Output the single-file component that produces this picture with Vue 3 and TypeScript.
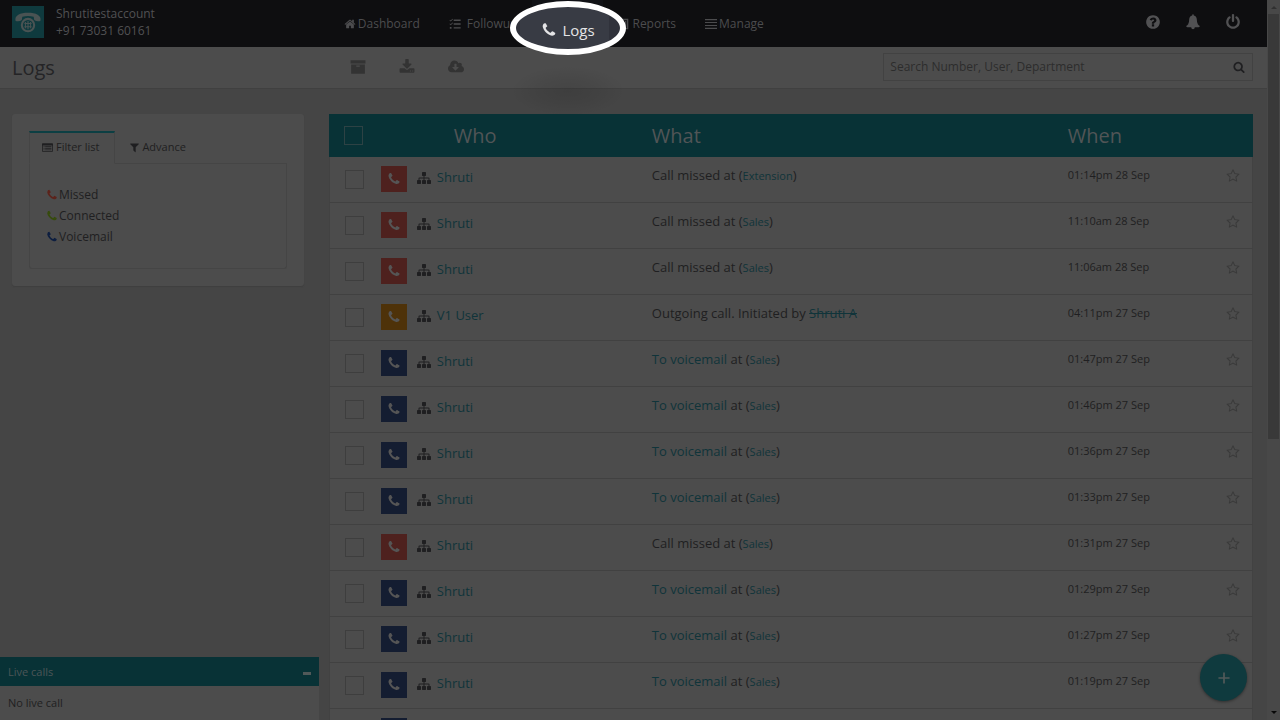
<script setup lang="ts">
import { computed, ref } from 'vue'

type Kind = 'missed' | 'outgoing' | 'voicemail'
interface Call {
  kind: Kind
  who: string
  when: string
  dept: string
}

const icons: Record<string, string> = {
  phone:
    'M1600 1240q0 27-10 70.5t-21 68.5q-21 50-122 106-94 51-186 51-27 0-53-3.5t-57.5-12.5-47-14.5-55.5-20.5-49-18q-98-35-175-83-127-79-264-216t-216-264q-48-77-83-175-3-9-18-49t-20.5-55.5-14.5-47-12.5-57.5-3.5-53q0-92 51-186 56-101 106-122 25-11 68.5-21t70.5-10q14 0 21 3 18 6 53 76 11 19 30 54t35 63.5 31 53.5q3 4 17.5 25t21.5 35.5 7 28.5q0 20-28.5 50t-62 55-62 53-28.5 46q0 9 5 22.5t8.5 20.5 14 24 11.5 19q76 137 174 235t235 174q2 1 19 11.5t24 14 20.5 8.5 22.5 5q18 0 46-28.5t53-62 55-62 50-28.5q14 0 28.5 7t35.5 21.5 25 17.5q25 15 53.5 31t63.5 35 54 30q70 35 76 53 3 7 3 21z',
  home: 'M1472 992v480q0 26-19 45t-45 19h-384v-384h-256v384h-384q-26 0-45-19t-19-45v-480q0-1 .5-3t.5-3l575-474 575 474q1 2 1 6zm223-69l-62 74q-8 9-21 11h-3q-13 0-21-7l-692-577-692 577q-12 8-24 7-13-2-21-11l-62-74q-8-10-7-23.5t11-21.5l719-599q32-26 76-26t76 26l244 204v-195q0-14 9-23t23-9h192q14 0 23 9t9 23v408l219 182q10 8 11 21.5t-7 23.5z',
  tasks:
    'M60 330l90-80 110 110 250-250 90 90-340 340zM60 890l90-80 110 110 250-250 90 90-340 340zM120 1330h260v260h-260zM700 230h1040v200h-1040zM700 800h1040v200h-1040zM700 1370h1040v200h-1040z',
  report:
    'M256 128h1280v1536h-1280zM448 320v1152h896v-1152zM560 900h180v460h-180zM810 650h180v710h-180zM1060 440h180v920h-180z',
  bars: 'M0 150h1792v170h-1792zM0 590h1792v170h-1792zM0 1030h1792v170h-1792zM0 1470h1792v170h-1792z',
  help: 'M1024 1376v-192q0-14-9-23t-23-9h-192q-14 0-23 9t-9 23v192q0 14 9 23t23 9h192q14 0 23-9t9-23zm256-672q0-88-55.5-163t-138.5-116-170-41q-243 0-371 213-15 24 8 42l132 100q7 6 19 6 16 0 25-12 53-68 86-92 34-24 86-24 48 0 85.5 26t37.5 59q0 38-20 61t-68 45q-63 28-115.5 86.5t-52.5 125.5v36q0 14 9 23t23 9h192q14 0 23-9t9-23q0-19 21.5-49.5t54.5-49.5q32-18 49-28.5t46-35 44.5-48 28-60.5 12.5-81zm384 192q0 209-103 385.5t-279.5 279.5-385.5 103-385.5-103-279.5-279.5-103-385.5 103-385.5 279.5-279.5 385.5-103 385.5 103 279.5 279.5 103 385.5z',
  bell: 'M896 30q90 0 95 125 310 60 330 440 10 420 120 550 80 100 220 200q0 130-130 130h-430q-20 240-205 240t-205-240h-430q-130 0-130-130 140-100 220-200 110-130 120-550 20-380 330-440 5-125 95-125z',
  power:
    'M1664 896q0 156-61 298t-164 245-245 164-298 61-298-61-245-164-164-245-61-298q0-182 80.5-343t226.5-270q43-32 95.5-25t83.5 50q32 42 24.5 94.5t-49.5 84.5q-98 74-151.5 181t-53.5 228q0 104 40.5 198.5t109.5 163.5 163.5 109.5 198.5 40.5 198.5-40.5 163.5-109.5 109.5-163.5 40.5-198.5q0-121-53.5-228t-151.5-181q-42-32-49.5-84.5t24.5-94.5q31-43 84-50t95 25q146 109 226.5 270t80.5 343zm-640-768v640q0 52-38 90t-90 38-90-38-38-90v-640q0-52 38-90t90-38 90 38 38 90z',
  archive: 'M64 128h1664v384h-1664zM128 608h1536v1056h-1536zM700 736v128h392v-128z',
  download:
    'M1344 1344q0-26-19-45t-45-19-45 19-19 45 19 45 45 19 45-19 19-45zm256 0q0-26-19-45t-45-19-45 19-19 45 19 45 45 19 45-19 19-45zm128-224v320q0 40-28 68t-68 28h-1472q-40 0-68-28t-28-68v-320q0-40 28-68t68-28h465l135 136q58 56 136 56t136-56l136-136h464q40 0 68 28t28 68zm-325-569q17 41-14 70l-448 448q-18 19-45 19t-45-19l-448-448q-31-29-14-70 17-39 59-39h256v-448q0-26 19-45t45-19h256q26 0 45 19t19 45v448h256q42 0 59 39z',
  cloud:
    'M1280 928q0-14-9-23t-23-9h-224v-352q0-13-9.5-22.5t-22.5-9.5h-192q-13 0-22.5 9.5t-9.5 22.5v352h-224q-13 0-22.5 9.5t-9.5 22.5q0 14 9 23l352 352q9 9 23 9t23-9l351-351q10-12 10-24zm640 224q0 159-112.5 271.5t-271.5 112.5h-1088q-185 0-316.5-131.5t-131.5-316.5q0-130 70-240t188-165q-2-30-2-43 0-212 150-362t362-150q156 0 285.5 87t188.5 231q71-62 166-62 106 0 181 75t75 181q0 76-41 138 130 31 213.5 135.5t83.5 238.5z',
  search:
    'M1216 832q0-185-131.5-316.5t-316.5-131.5-316.5 131.5-131.5 316.5 131.5 316.5 316.5 131.5 316.5-131.5 131.5-316.5zm512 832q0 52-38 90t-90 38q-54 0-90-38l-343-342q-179 124-399 124-143 0-273.5-55.5t-225-150-150-225-55.5-273.5 55.5-273.5 150-225 225-150 273.5-55.5 273.5 55.5 225 150 150 225 55.5 273.5q0 220-124 399l343 343q37 37 37 90z',
  listAlt:
    'M120 192h1552q120 0 120 120v1168q0 120-120 120h-1552q-120 0-120-120v-1168q0-120 120-120zM128 576v896h1536v-896zM256 672h160v140h-160zM512 672h1024v140h-1024zM256 940h160v140h-160zM512 940h1024v140h-1024zM256 1210h160v140h-160zM512 1210h1024v140h-1024z',
  filter:
    'M1595 295q17 41-14 70l-493 493v742q0 42-39 59-13 5-25 5-27 0-45-19l-256-256q-19-19-19-45v-486l-493-493q-31-29-14-70 17-39 59-39h1280q42 0 59 39z',
  sitemap:
    'M1792 1248v320q0 40-28 68t-68 28h-320q-40 0-68-28t-28-68v-320q0-40 28-68t68-28h96v-192h-512v192h96q40 0 68 28t28 68v320q0 40-28 68t-68 28h-320q-40 0-68-28t-28-68v-320q0-40 28-68t68-28h96v-192h-512v192h96q40 0 68 28t28 68v320q0 40-28 68t-68 28h-320q-40 0-68-28t-28-68v-320q0-40 28-68t68-28h96v-192q0-52 38-90t90-38h512v-192h-96q-40 0-68-28t-28-68v-320q0-40 28-68t68-28h320q40 0 68 28t28 68v320q0 40-28 68t-68 28h-96v192h512q52 0 90 38t38 90v192h96q40 0 68 28t28 68z',
  star: 'M1201 1004l306-297-422-62-189-382-189 382-422 62 306 297-73 421 378-199 377 199zm527-357q0 22-26 48l-363 354 86 500q1 7 1 20 0 50-41 50-19 0-40-12l-449-236-449 236q-22 12-40 12-21 0-31.5-14.5t-10.5-35.5q0-6 2-20l86-500-364-354q-25-27-25-48 0-37 56-46l502-73 225-455q19-41 49-41t49 41l225 455 502 73q56 9 56 46z',
}

const call = (kind: Kind, when: string, who = 'Shruti', dept = 'Sales'): Call => ({ kind, when, who, dept })

const calls: Call[] = [
  call('missed', '01:14pm 28 Sep', 'Shruti', 'Extension'),
  call('missed', '11:10am 28 Sep'),
  call('missed', '11:06am 28 Sep'),
  call('outgoing', '04:11pm 27 Sep', 'V1 User'),
  call('voicemail', '01:47pm 27 Sep'),
  call('voicemail', '01:46pm 27 Sep'),
  call('voicemail', '01:36pm 27 Sep'),
  call('voicemail', '01:33pm 27 Sep'),
  call('missed', '01:31pm 27 Sep'),
  call('voicemail', '01:29pm 27 Sep'),
  call('voicemail', '01:27pm 27 Sep'),
  call('voicemail', '01:19pm 27 Sep'),
  call('voicemail', '01:15pm 27 Sep'),
]

const selected = ref<number[]>([])
const allSelected = computed({
  get: () => selected.value.length === calls.length,
  set: (on: boolean) => {
    selected.value = on ? calls.map((_, i) => i) : []
  },
})
const query = ref('')
const tools = [
  { icon: 'archive', label: 'Archive' },
  { icon: 'download', label: 'Download' },
  { icon: 'cloud', label: 'Export' },
]
const account = [
  { icon: 'help', label: 'Help' },
  { icon: 'bell', label: 'Notifications' },
  { icon: 'power', label: 'Sign out' },
]
const filters = [
  { name: 'Missed', tone: 'red' },
  { name: 'Connected', tone: 'green' },
  { name: 'Voicemail', tone: 'blue' },
]
</script>

<template>
  <div class="screen">
    <div class="page">
      <header class="topbar split">
        <div class="brand">
          <svg class="logo" viewBox="0 0 31 31" aria-hidden="true">
            <rect width="31" height="31" fill="#0f3a3e" />
            <path d="M3.500 14.500C2 9 8 6.500 15.500 6.500S29 9 27.500 14.500Q24 15.500 21.500 13.500L21 10.500Q15.500 9 10 10.500L9.500 13.500Q7 15.500 3.500 14.500Z" fill="#4a5353" />
            <circle cx="15.500" cy="18.500" r="6" fill="#0f3a3e" stroke="#4a5353" stroke-width="2" />
            <path d="M13 15.500v6M15.500 14.500v8M18 15.500v6M12 17h7M12 20h7" stroke="#4a5353" stroke-width="1" />
          </svg>
          <div class="account-name">Shrutitestaccount<br />+91 73031 60161</div>
        </div>
        <div class="bar-main">
          <nav class="nav">
            <a href="#"><svg viewBox="0 0 1792 1792"><path :d="icons.home" /></svg>Dashboard</a>
            <a href="#" class="wide"><svg viewBox="0 0 1792 1792"><path :d="icons.tasks" /></svg>Followup</a>
            <div class="current">
              <span class="shade"></span>
              <a href="#" class="spotlight" aria-current="page"><svg viewBox="0 0 1792 1792"><path :d="icons.phone" /></svg>Logs</a>
            </div>
            <a href="#"><svg viewBox="0 0 1792 1792"><path fill-rule="evenodd" :d="icons.report" /></svg>Reports</a>
            <a href="#"><svg viewBox="0 0 1792 1792"><path :d="icons.bars" /></svg>Manage</a>
          </nav>
          <div class="account">
            <button v-for="a in account" :key="a.icon" type="button" :aria-label="a.label">
              <svg viewBox="0 0 1792 1792"><path :d="icons[a.icon]" /></svg>
            </button>
          </div>
        </div>
      </header>

      <div class="titlebar split">
        <h1>Logs</h1>
        <div class="bar-main">
          <div class="tools">
            <button v-for="t in tools" :key="t.icon" type="button" :aria-label="t.label">
              <svg :viewBox="t.icon === 'cloud' ? '0 0 1920 1792' : '0 0 1792 1792'"><path fill-rule="evenodd" :d="icons[t.icon]" /></svg>
            </button>
          </div>
          <form class="search" @submit.prevent>
            <input v-model="query" type="text" placeholder="Search Number, User, Department" aria-label="Search" />
            <button type="submit" aria-label="Search"><svg viewBox="0 0 1792 1792"><path :d="icons.search" /></svg></button>
          </form>
        </div>
      </div>

      <main class="content split">
        <aside class="filters">
          <div class="tabs">
            <button type="button" class="tab active"><svg viewBox="0 0 1792 1792"><path fill-rule="evenodd" :d="icons.listAlt" /></svg>Filter list</button>
            <button type="button" class="tab"><svg viewBox="0 0 1792 1792"><path :d="icons.filter" /></svg>Advance</button>
            <span class="tab-rule"></span>
          </div>
          <ul>
            <li v-for="f in filters" :key="f.name">
              <a href="#"><svg viewBox="0 0 1792 1792" :class="f.tone"><path :d="icons.phone" /></svg>{{ f.name }}</a>
            </li>
          </ul>
        </aside>

        <table class="log">
          <colgroup>
            <col class="c-pick" />
            <col class="c-who" />
            <col class="c-what" />
            <col class="c-when" />
            <col class="c-star" />
          </colgroup>
          <thead>
            <tr>
              <th><input v-model="allSelected" type="checkbox" aria-label="Select all" /></th>
              <th class="th-who">Who</th>
              <th>What</th>
              <th>When</th>
              <th></th>
            </tr>
          </thead>
          <tbody>
            <tr v-for="(c, i) in calls" :key="i">
              <td class="pick"><input v-model="selected" type="checkbox" :value="i" :aria-label="'Select call ' + (i + 1)" /></td>
              <td>
                <div class="who">
                  <span class="badge" :class="c.kind"><svg viewBox="0 0 1792 1792"><path :d="icons.phone" /></svg></span>
                  <svg class="org" viewBox="0 0 1792 1792"><path :d="icons.sitemap" /></svg>
                  <a href="#">{{ c.who }}</a>
                </div>
              </td>
              <td class="what">
                <template v-if="c.kind === 'outgoing'">Outgoing call. Initiated by <a href="#" class="gone">Shruti A</a></template>
                <template v-else>
                  <template v-if="c.kind === 'missed'">Call missed</template><a v-else href="#">To voicemail</a>
                  at (<a href="#" class="dept">{{ c.dept }}</a>)
                </template>
              </td>
              <td class="when">{{ c.when }}</td>
              <td class="star">
                <button type="button" aria-label="Star"><svg viewBox="0 0 1792 1792"><path :d="icons.star" /></svg></button>
              </td>
            </tr>
          </tbody>
        </table>
      </main>

      <section class="live">
        <div class="live-head">Live calls<button type="button" aria-label="Minimise"><span></span></button></div>
        <p>No live call</p>
      </section>

      <button type="button" class="add" aria-label="Add">
        <svg viewBox="0 0 14 14"><path d="M7 0.500v13M0.500 7h13" stroke="currentColor" stroke-width="2" /></svg>
      </button>
    </div>

    <div class="scroll" aria-hidden="true">
      <svg viewBox="0 0 8 14"><path d="M1 9l3-3 3 3z" fill="#303030" /></svg>
      <span class="thumb"></span>
      <svg viewBox="0 0 8 14"><path d="M1 5h6l-3 3z" fill="#080808" /></svg>
    </div>
  </div>
</template>

<style>
body {
  margin: 0;
  background: #454545;
}
</style>

<style scoped>
.screen {
  display: grid;
  grid-template-columns: minmax(0, 1fr) 13px;
  height: 100vh;
  overflow: hidden;
  background: #454545;
  color: #1f1f21;
  font: 13px/20px 'Open Sans', 'Noto Sans', sans-serif;
}
.screen * {
  box-sizing: border-box;
}
svg {
  fill: currentColor;
  flex: none;
}
a {
  color: #10343a;
  text-decoration: none;
}
button {
  padding: 0;
  border: 0;
  background: none;
  color: inherit;
  font: inherit;
  cursor: pointer;
}
.page {
  position: relative;
  height: 100vh;
  overflow: hidden;
}
.split {
  display: grid;
  grid-template-columns: minmax(0, 24fr) minmax(0, 76fr);
  column-gap: 25px;
  padding: 0 14px 0 12px;
}
.bar-main {
  display: flex;
  align-items: center;
  justify-content: space-between;
}

.topbar {
  height: 47px;
  background: #0e0e10;
  color: #515153;
}
.brand {
  display: flex;
  align-items: center;
  gap: 12px;
  padding-bottom: 3px;
}
.logo {
  width: 32px;
  height: 32px;
}
.account-name {
  font-size: 12px;
  line-height: 17px;
}
.nav {
  display: flex;
  align-items: center;
  gap: 29px;
  height: 47px;
  padding-left: 15px;
}
.nav a {
  display: flex;
  align-items: center;
  gap: 2px;
  color: #4c4c4e;
  font-size: 12px;
}
.nav a svg {
  width: 12px;
  height: 12px;
}
.nav .wide {
  gap: 6px;
}
.nav .current {
  position: relative;
  align-self: stretch;
  width: 43px;
}
.current::before {
  content: '';
  position: absolute;
  inset: 0 -14px;
  background: #111216;
}
.nav .spotlight {
  position: absolute;
  left: 50%;
  top: 1px;
  z-index: 2;
  justify-content: center;
  gap: 5px;
  width: 116px;
  height: 54px;
  margin-left: -58px;
  padding-top: 4px;
  border: 6px solid #fff;
  border-radius: 50%;
  background: linear-gradient(90deg, #30323b 4px, #383b44 4px calc(100% - 11px), #30323b calc(100% - 11px));
  color: #e4e4e6;
  font-size: 15px;
}
.nav .spotlight svg {
  width: 16px;
  height: 16px;
}
.shade {
  position: absolute;
  left: 50%;
  top: 66px;
  z-index: 1;
  width: 116px;
  height: 50px;
  margin-left: -58px;
  border-radius: 50%;
  background: radial-gradient(closest-side, rgba(0, 0, 0, 0.1), rgba(0, 0, 0, 0.06) 50%, transparent);
}
.account {
  display: flex;
  gap: 24px;
  padding: 0 12px 3px 0;
}
.account svg {
  display: block;
  width: 16px;
  height: 16px;
}

.titlebar {
  height: 42px;
  border-bottom: 1px solid #404040;
  background: #4c4c4c;
}
h1 {
  margin: 0;
  font-size: 20px;
  font-weight: 400;
  line-height: 42px;
  color: #242426;
}
.tools {
  display: flex;
  align-items: center;
  gap: 33px;
  padding: 0 0 3px 21px;
  color: #333;
}
.tools svg {
  display: block;
  width: 16px;
  height: 16px;
}
.search {
  display: flex;
  align-items: center;
  width: 40%;
  height: 28px;
  margin-top: -3px;
  border: 1px solid #424242;
}
.search input {
  flex: 1;
  min-width: 0;
  padding: 0 6px;
  border: 0;
  outline: 0;
  background: none;
  color: #1f1f21;
  font: inherit;
  font-size: 12px;
}
.search input::placeholder {
  color: #2c2c2c;
  opacity: 1;
}
.search button {
  width: 26px;
}
.search svg {
  display: block;
  width: 12px;
  height: 12px;
  margin: auto;
}

.content {
  align-items: start;
  padding-top: 25px;
}
.filters {
  padding: 17px;
  border-radius: 3px;
  background: #4c4c4c;
  box-shadow: 0 1px 1px #3f3f3f;
}
.tabs {
  display: flex;
}
.tab {
  display: flex;
  align-items: center;
  gap: 2px;
  height: 33px;
  padding: 0 14px 2px;
  border-top: 2px solid transparent;
  border-bottom: 1px solid #454545;
  font-size: 11px;
}
.tab.active {
  padding: 0 15px 2px 12px;
  gap: 3px;
  border-top-color: #0c3f43;
  border-right: 1px solid #454545;
  border-left: 1px solid #454545;
  border-bottom-color: transparent;
}
.tab svg {
  width: 11px;
  height: 11px;
}
.tab-rule {
  flex: 1;
  border-bottom: 1px solid #454545;
}
.filters ul {
  margin: 0;
  padding: 20px 16px 21px;
  border: 1px solid #454545;
  border-top: 0;
  border-radius: 0 0 3px 3px;
  list-style: none;
}
.filters li {
  line-height: 21px;
}
.filters li a {
  display: flex;
  align-items: center;
  gap: 1px;
  color: #1f1f21;
  font-size: 12px;
}
.filters li svg {
  width: 12px;
  height: 12px;
}
.red {
  color: #5c231b;
}
.green {
  color: #364b0c;
}
.blue {
  color: #0d1e40;
}

.log {
  width: 100%;
  border-collapse: separate;
  border-spacing: 0;
  table-layout: fixed;
  background: #4c4c4c;
  box-shadow: inset 1px 0 #424242, inset -1px 0 #424242;
}
.c-pick {
  width: 52px;
}
.c-who {
  width: 271px;
}
.c-what {
  width: 45%;
}
.c-star {
  width: 40px;
}
th {
  height: 43px;
  padding: 0;
  background: #083236;
  color: #515556;
  font-size: 20px;
  font-weight: 400;
  text-align: left;
}
.th-who {
  padding-left: 73px;
}
td {
  height: 46px;
  padding: 9px 0 0;
  border-bottom: 1px solid #414141;
  vertical-align: top;
}
.log input {
  display: block;
  appearance: none;
  width: 19px;
  height: 19px;
  margin: 0 0 0 15px;
  border: 1px solid #3e3e3e;
}
.log th input {
  border-color: #2d4244;
}
.log input:checked {
  background: #0f3a3e;
}
.log .pick {
  padding-top: 13px;
}
.log .pick input {
  margin-left: 16px;
}
.who {
  display: flex;
  align-items: flex-start;
}
.who a {
  margin-left: 6px;
  line-height: 23px;
}
.badge {
  display: grid;
  place-items: center;
  width: 26px;
  height: 26px;
  margin-right: 10px;
  color: #555;
}
.badge svg {
  width: 14px;
  height: 14px;
}
.missed {
  background: #4e211e;
}
.outgoing {
  background: #4e3209;
}
.voicemail {
  background: #141d31;
}
.org {
  width: 14px;
  height: 14px;
  margin-top: 5px;
}
.what,
.when {
  padding-top: 8px;
}
.dept,
.when {
  font-size: 11px;
}
.gone {
  text-decoration: line-through;
}
.star {
  padding-left: 13px;
}
.star svg {
  display: block;
  width: 14px;
  height: 14px;
  margin-top: 3px;
  color: #3a3a3a;
}

.live {
  position: absolute;
  left: 0;
  bottom: 0;
  width: 319px;
  background: #4c4c4c;
  font-size: 11px;
}
.live-head {
  display: flex;
  align-items: center;
  justify-content: space-between;
  height: 29px;
  padding: 0 8px;
  background: #083236;
  color: #4c5556;
}
.live-head span {
  display: block;
  width: 8px;
  height: 3px;
  margin-top: 4px;
  background: #515959;
}
.live p {
  margin: 0;
  padding: 0 8px;
  line-height: 34px;
}
.add {
  position: absolute;
  right: 20px;
  bottom: 19px;
  display: grid;
  place-items: center;
  width: 47px;
  height: 47px;
  border-radius: 50%;
  background: #0f3a3e;
  box-shadow: 0 1px 3px rgba(0, 0, 0, 0.4);
  color: #515959;
}
.add svg {
  width: 12px;
  height: 12px;
}

.scroll {
  display: flex;
  flex-direction: column;
  align-items: center;
  background: #484848;
}
.scroll svg {
  width: 8px;
  height: 14px;
}
.thumb {
  width: 11px;
  height: 59%;
  margin-bottom: auto;
  background: #393939;
}
</style>
